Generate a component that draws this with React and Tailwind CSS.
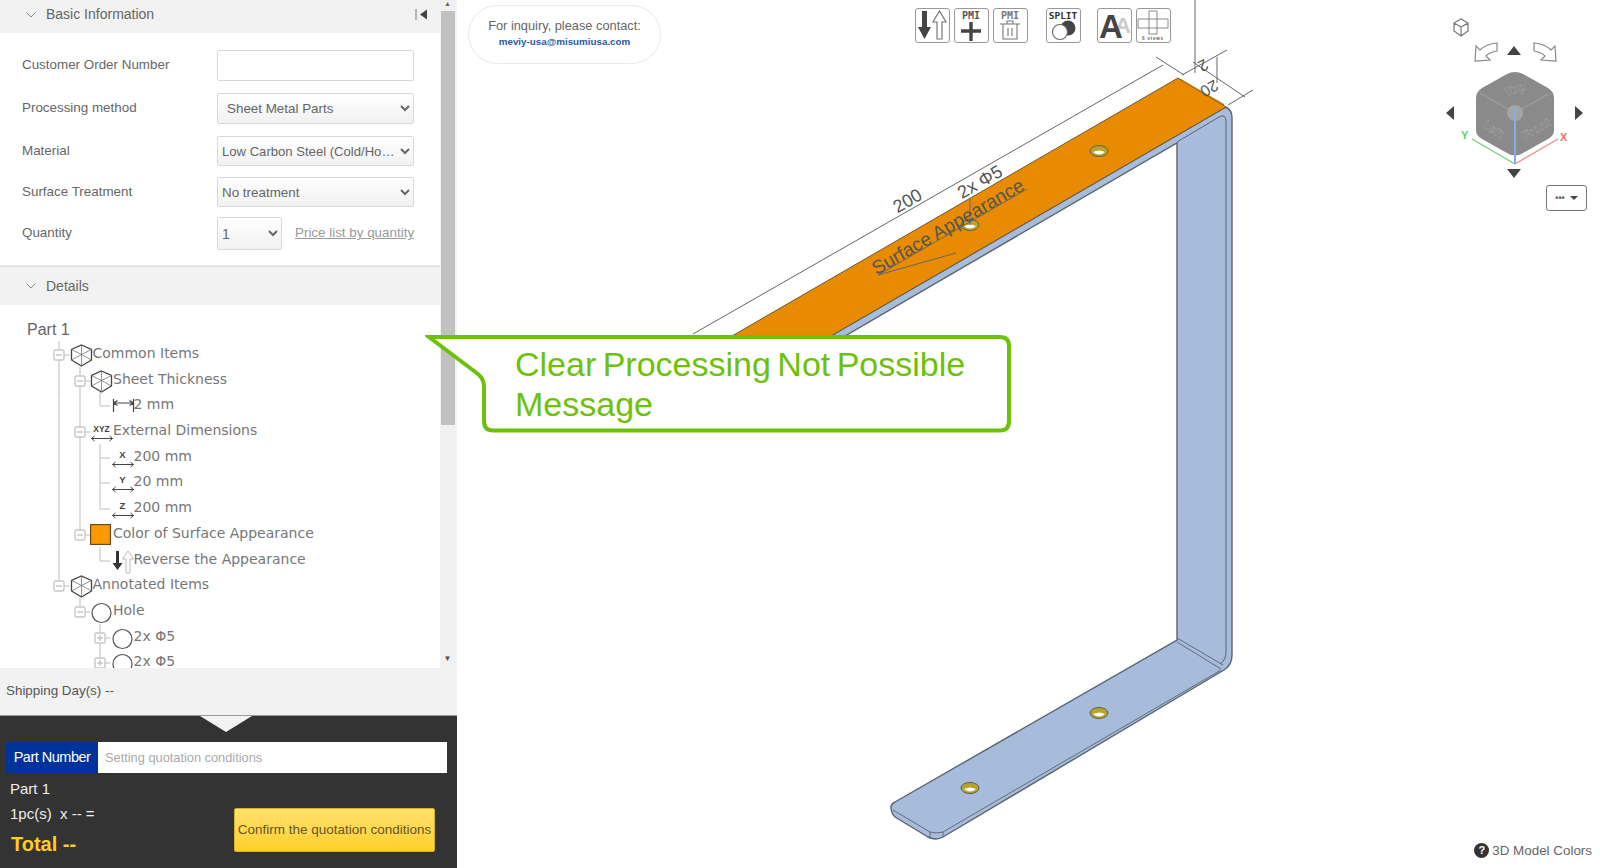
import { useState } from "react";

const treeRows = [
    { cells: ["minus"], icon: "cube", text: "Common Items" },
    { cells: ["v", "minus"], icon: "cube", text: "Sheet Thickness" },
    { cells: ["v", "v", "last"], icon: "thick", text: "2 mm" },
    { cells: ["v", "minus"], icon: "xyz", text: "External Dimensions" },
    { cells: ["v", "v", "tee"], icon: "x", text: "200 mm" },
    { cells: ["v", "v", "tee"], icon: "y", text: "20 mm" },
    { cells: ["v", "v", "last"], icon: "z", text: "200 mm" },
    { cells: ["v", "minusEnd"], icon: "color", text: "Color of Surface Appearance" },
    { cells: ["v", "", "last"], icon: "reverse", text: "Reverse the Appearance" },
    { cells: ["minusEnd"], icon: "cube", text: "Annotated Items" },
    { cells: ["", "minusEnd"], icon: "circle", text: "Hole" },
    { cells: ["", "", "plus"], icon: "circle", text: "2x Φ5" },
    { cells: ["", "", "plus"], icon: "circle", text: "2x Φ5" },
];

// 트리 연결선 셀
function TreeCell({ type }) {
    const line = "#c8c8c8";
    const isBox = type === "minus" || type === "minusEnd" || type === "plus";
    return (
        <svg width="20.5" height="26" viewBox="0 0 20.5 26" className="shrink-0 overflow-visible">
            {(type === "v" || type === "minus" || type === "tee" || type === "plus") && (
                <line x1="10" y1="0" x2="10" y2="26" stroke={line} strokeWidth="1.2" />
            )}
            {(type === "minusEnd" || type === "last") && <line x1="10" y1="0" x2="10" y2="14" stroke={line} strokeWidth="1.2" />}
            {(type === "tee" || type === "last") && <line x1="10" y1="14" x2="20" y2="14" stroke={line} strokeWidth="1.2" />}
            {isBox && (
                <>
                    <line x1="15" y1="14" x2="20.5" y2="14" stroke={line} strokeWidth="1.2" />
                    <rect x="5" y="9" width="10" height="10" rx="1.5" fill="#fff" stroke={line} strokeWidth="1.4" />
                    <line x1="7" y1="14" x2="13" y2="14" stroke="#bbb" strokeWidth="1.2" />
                    {type === "plus" && <line x1="10" y1="11" x2="10" y2="17" stroke="#bbb" strokeWidth="1.2" />}
                </>
            )}
        </svg>
    );
}

function ArrowDim({ label }) {
    return (
        <svg width="24" height="26" viewBox="0 0 24 26" className="overflow-visible">
            <text x="11.5" y="13.5" textAnchor="middle" fontSize={label.length > 1 ? 8.5 : 9.5} fontWeight="700" fill="#444" fontFamily="Liberation Sans, sans-serif">
                {label}
            </text>
            <path d="M1.5 20.5H22.5M1.5 20.5l3-2.5M1.5 20.5l3 2.5M22.5 20.5l-3-2.5M22.5 20.5l-3 2.5" fill="none" stroke="#444" strokeWidth="1" />
        </svg>
    );
}

function TreeIcon({ name }) {
    if (name === "cube") {
        return (
            <svg width="24" height="26" viewBox="0 0 24 26" className="overflow-visible">
                <path d="M11.5 4L21.5 8.5V19L11.5 25L1.5 19V8.5Z" fill="none" stroke="#444" strokeWidth="1.3" />
                <path d="M1.5 8.5L11.5 13.5L21.5 8.5M11.5 13.5V25M11.5 4V13.5M1.5 19L11.5 13.5L21.5 19" fill="none" stroke="#777" strokeWidth="0.8" />
            </svg>
        );
    }
    if (name === "thick") {
        return (
            <svg width="24" height="26" viewBox="0 0 24 26" className="overflow-visible">
                <path d="M2.5 7V20M22.5 7V20M2.5 11H22.5M2.5 11l4-2.5M2.5 11l4 2.5M22.5 11l-4-2.5M22.5 11l-4 2.5" fill="none" stroke="#444" strokeWidth="1.2" />
            </svg>
        );
    }
    if (name === "xyz") return <ArrowDim label="XYZ" />;
    if (name === "x") return <ArrowDim label="X" />;
    if (name === "y") return <ArrowDim label="Y" />;
    if (name === "z") return <ArrowDim label="Z" />;
    if (name === "color") {
        return <div className="w-[21px] h-[21px] mt-[3px] bg-[#ff9900] border border-[#6b4a10] shadow-[inset_0_0_0_1px_#e08a00]"></div>;
    }
    if (name === "reverse") {
        return (
            <svg width="24" height="26" viewBox="0 0 24 26" className="overflow-visible">
                <path d="M5 4H8V16H11.5L6.5 23L1.5 16H5Z" fill="#333" />
                <path d="M15 26V12H11.5L17 4L22.5 12H19V26Z" fill="#fff" stroke="#bbb" strokeWidth="1" />
            </svg>
        );
    }
    return (
        <svg width="24" height="26" viewBox="0 0 24 26" className="overflow-visible">
            <circle cx="11.5" cy="15" r="9.5" fill="none" stroke="#555" strokeWidth="1.2" />
        </svg>
    );
}

function TreeRow({ row }) {
    return (
        <div className="flex items-start h-[25.7px]">
            {row.cells.map((c, i) => (
                <TreeCell key={i} type={c} />
            ))}
            <div className="w-[23px] h-[26px] shrink-0">
                <TreeIcon name={row.icon} />
            </div>
            <span className="text-[14px] leading-[25px] text-[#777] whitespace-nowrap font-['DejaVu_Sans',sans-serif]">{row.text}</span>
        </div>
    );
}

function FormRow({ label, className, children }) {
    return (
        <div className={`flex items-center justify-between ${className}`}>
            <span className="text-[#666]">{label}</span>
            {children}
        </div>
    );
}

const selectClass =
    "w-[197px] h-full border border-[#d9d9d9] rounded-[2px] bg-gradient-to-b from-white to-[#f1f1f1] text-[#666] text-[13.4px]";

function ToolBtn({ className, children }) {
    return (
        <div className={`w-[35px] h-[35px] bg-white border-[1.5px] border-[#999] rounded-[3px] overflow-hidden ${className || ""}`}>
            <svg width="32" height="32" viewBox="0 0 32 32">
                {children}
            </svg>
        </div>
    );
}

function Toolbar() {
    const mono = "DejaVu Sans Mono, monospace";
    return (
        <div className="absolute top-[8px] left-[458px] flex">
            <ToolBtn>
                <path d="M6 2H11V18H15L8.5 30L2 18H6Z" fill="#444" />
                <path d="M21 30V13H17L23.5 2L30 13H26V30Z" fill="#fff" stroke="#777" strokeWidth="1.2" />
            </ToolBtn>
            <ToolBtn className="ml-[4px]">
                <text x="16" y="10" textAnchor="middle" fontSize="10" fontWeight="700" fill="#555" fontFamily={mono}>PMI</text>
                <path d="M16 13V32M6 22H26" stroke="#444" strokeWidth="3.4" />
            </ToolBtn>
            <ToolBtn className="ml-[4px]">
                <text x="16" y="10" textAnchor="middle" fontSize="10" fontWeight="700" fill="#777" fontFamily={mono}>PMI</text>
                <path d="M6 15H26M13 15V12H19V15M9 15V30H23V15M14 19V27M18 19V27" fill="none" stroke="#777" strokeWidth="1.1" />
            </ToolBtn>
            <ToolBtn className="ml-[18px]">
                <text x="16" y="10" textAnchor="middle" fontSize="9.5" fontWeight="700" fill="#333" fontFamily={mono}>SPLIT</text>
                <circle cx="21" cy="19" r="7.5" fill="#444" />
                <circle cx="13" cy="23" r="7.5" fill="#fff" stroke="#666" strokeWidth="1.1" />
            </ToolBtn>
            <ToolBtn className="ml-[16px]">
                <text x="25" y="24" textAnchor="middle" fontSize="22" fontWeight="700" fill="#ccc" fontFamily="Liberation Sans, sans-serif">A</text>
                <text x="13" y="29" textAnchor="middle" fontSize="33" fontWeight="700" fill="#444" fontFamily="Liberation Sans, sans-serif">A</text>
            </ToolBtn>
            <ToolBtn className="ml-[4px]">
                <path d="M12 2H20V10H31V19H20V25H12V19H1V10H12Z M12 10H20V19H12Z" fill="none" stroke="#888" strokeWidth="1" />
                <text x="16" y="30.5" textAnchor="middle" fontSize="4.6" letterSpacing="0.8" fontWeight="700" fill="#666" fontFamily="Liberation Sans, sans-serif">6 views</text>
            </ToolBtn>
        </div>
    );
}

function Hole({ cx, cy }) {
    return (
        <g>
            <ellipse cx={cx} cy={cy} rx="9" ry="5.5" fill="#b9a228" stroke="#5b5f55" strokeWidth="1" />
            <path d={`M${cx - 6} ${cy + 1}Q${cx} ${cy - 2} ${cx + 6} ${cy + 1}Q${cx} ${cy + 6} ${cx - 6} ${cy + 1}Z`} fill="#fff" />
        </g>
    );
}

// 3D 모델 도면
function PartDrawing() {
    const stroke = "#5a6470";
    return (
        <svg className="absolute inset-0" width="1143" height="868" viewBox="457 0 1143 868">
            <path
                d="M824 340L1226 107Q1232 110 1232 118V655Q1232 665 1224 670L943 837Q936 841 928 837L895 817Q891 813 891 807Q891 804 895 802L1177 640V143L838 340Z"
                fill="#a7bbdb"
                stroke={stroke}
                strokeWidth="1.4"
            />
            <path d="M1226 122V652Q1226 660 1220 664M1226 122Q1226 113 1219 117L1177 142" fill="none" stroke={stroke} strokeWidth="1" />
            <path d="M1177 638L1223 665M1177 642L1221 669M1221 670L943 832Q936 834 930 832L893 810M930 832V839M943 832V837" fill="none" stroke={stroke} strokeWidth="0.9" />
            <path d="M1178 78L1226 107L824 340H725Z" fill="#e88b00" stroke="#6a5a3a" strokeWidth="1" />
            <path d="M1181 80L1224 105" fill="none" stroke="#b87410" strokeWidth="1.5" />
            <Hole cx={1099} cy={151} />
            <Hole cx={970} cy={225} />
            <Hole cx={1099} cy={713} />
            <Hole cx={970} cy={788} />

            {/* 치수선 */}
            <g fill="none" stroke="#666" strokeWidth="1">
                <path d="M693 334L1163 65M1156 57L1184 75" />
                <path d="M1195 0V73M1182 75L1227 50M1193 62L1245 97M1228 105L1253 90M1217 57V83" />
                <path d="M970 225V199M878 275L1027 189M878 275L956 253" />
            </g>
            <g fill="#555" fontFamily="Liberation Sans, sans-serif">
                <text x="907" y="207" textAnchor="middle" fontSize="18" transform="rotate(-30 907 200)">200</text>
                <text x="980" y="188" textAnchor="middle" fontSize="18" transform="rotate(-30 980 182)">2x Φ5</text>
                <text x="948" y="233" textAnchor="middle" fontSize="19" transform="rotate(-30 948 227)">Surface Appearance</text>
                <text x="1209" y="93" textAnchor="middle" fontSize="16" transform="rotate(150 1209 88)">20</text>
                <text x="1203" y="70" textAnchor="middle" fontSize="16" transform="rotate(150 1203 65)">2</text>
            </g>
        </svg>
    );
}

function ViewCube() {
    return (
        <svg className="absolute inset-0" width="1143" height="868" viewBox="457 0 1143 868">
            <path d="M1461 19L1468 23V31L1461 36L1454 31V23ZM1454 23L1461 27L1468 23M1461 27V36" fill="#fff" stroke="#777" strokeWidth="1.2" />
            <path d="M1497 43Q1486 44 1480 50L1476 46L1475 61L1490 60L1486 56Q1490 52 1497 51Z" fill="#fff" stroke="#888" strokeWidth="1.2" />
            <path d="M1534 43Q1545 44 1551 50L1555 46L1556 61L1541 60L1545 56Q1541 52 1534 51Z" fill="#fff" stroke="#888" strokeWidth="1.2" />
            <path d="M1514 46L1521 55H1507ZM1514 178L1521 169H1507ZM1446 113L1454 106V120ZM1583 113L1575 106V120Z" fill="#444" />
            <path d="M1507 74Q1515 70 1523 74L1548 88Q1554 92 1554 98V130Q1554 136 1548 139L1523 153Q1515 158 1507 153L1482 139Q1476 136 1476 130V98Q1476 92 1482 88Z" fill="#8a8a8a" />
            <path d="M1480 93L1515 113L1550 93M1515 113V155" fill="none" stroke="#999" strokeWidth="1.5" />
            <circle cx="1515" cy="113" r="8" fill="#a4a4a4" />
            <g fontFamily="Liberation Sans, sans-serif" fontSize="12" fontWeight="700" fill="#7c7c7c" stroke="#aaaaaa" strokeWidth="0.5">
                <text x="1515" y="93" textAnchor="middle" transform="rotate(-20 1515 89)">Top</text>
                <text x="1493" y="133" textAnchor="middle" transform="rotate(35 1493 129)">Left</text>
                <text x="1536" y="133" textAnchor="middle" transform="rotate(-30 1536 129)">Front</text>
            </g>
            <path d="M1515 164L1472 139" stroke="#6fce7a" strokeWidth="1.3" />
            <path d="M1515 164L1558 139" stroke="#f08a8a" strokeWidth="1.3" />
            <path d="M1515 164V108" stroke="#7fb0ea" strokeWidth="2" />
            <text x="1461" y="139" fontSize="11" fontWeight="700" fill="#5ccf70" fontFamily="Liberation Sans, sans-serif">Y</text>
            <text x="1560" y="141" fontSize="11" fontWeight="700" fill="#ee7070" fontFamily="Liberation Sans, sans-serif">X</text>
        </svg>
    );
}

export default function App() {
    const [qty] = useState("1");

    return (
        <div className="relative w-[1600px] h-[868px] flex overflow-hidden bg-white font-['Liberation_Sans',Arial,sans-serif] text-[13.4px]">
            {/* 왼쪽 패널 */}
            <aside className="w-[457px] h-full shrink-0 flex flex-col">
                <div className="h-[668px] flex">
                    <div className="w-[440px] flex flex-col">
                        <div className="h-[33px] bg-[#f2f2f2] flex items-center pl-[26px] pr-[12px] pb-[4px] text-[14px]">
                            <svg width="10" height="6" viewBox="0 0 10 6" className="mr-[10px]">
                                <path d="M0.5 0.5L5 5L9.5 0.5" fill="none" stroke="#888" strokeWidth="1" />
                            </svg>
                            <span className="text-[#666] flex-1">Basic Information</span>
                            <svg width="13" height="11" viewBox="0 0 13 11">
                                <path d="M1 0V11" stroke="#777" strokeWidth="1" />
                                <path d="M12 0.5V10.5L5 5.5Z" fill="#444" />
                            </svg>
                        </div>
                        <div className="pt-[17px] pb-[15px] pl-[22px] pr-[26px] flex flex-col">
                            <FormRow label="Customer Order Number" className="h-[31px] mb-[12px]">
                                <input className="w-[197px] h-full border border-[#d9d9d9] rounded-[2px] bg-white" />
                            </FormRow>
                            <FormRow label="Processing method" className="h-[31px] mb-[12px]">
                                <select className={`${selectClass} pl-[5px]`} defaultValue="Sheet Metal Parts">
                                    <option>Sheet Metal Parts</option>
                                </select>
                            </FormRow>
                            <FormRow label="Material" className="h-[30px] mb-[11px]">
                                <select className="w-[197px] h-full border border-[#d9d9d9] rounded-[2px] bg-gradient-to-b from-white to-[#f1f1f1] text-[#666] text-[13.1px] truncate" defaultValue="Low Carbon Steel (Cold/Hot Rolled)">
                                    <option>Low Carbon Steel (Cold/Hot Rolled)</option>
                                </select>
                            </FormRow>
                            <FormRow label="Surface Treatment" className="h-[30px] mb-[10px]">
                                <select className={selectClass} defaultValue="No treatment">
                                    <option>No treatment</option>
                                </select>
                            </FormRow>
                            <div className="flex items-center h-[33px]">
                                <span className="text-[#666] w-[195px] shrink-0">Quantity</span>
                                <select className="w-[65px] shrink-0 h-full border border-[#d9d9d9] rounded-[2px] bg-gradient-to-b from-white to-[#f1f1f1] text-[#666] text-[14px]" defaultValue={qty}>
                                    <option>1</option>
                                </select>
                                <a className="ml-[13px] text-[#999] underline whitespace-nowrap">Price list by quantity</a>
                            </div>
                        </div>
                        <div className="h-[40px] bg-[#f2f2f2] border-t-2 border-[#e4e4e4] flex items-center pl-[26px] text-[14px]">
                            <svg width="10" height="6" viewBox="0 0 10 6" className="mr-[10px]">
                                <path d="M0.5 0.5L5 5L9.5 0.5" fill="none" stroke="#888" strokeWidth="1" />
                            </svg>
                            <span className="text-[#666]">Details</span>
                        </div>
                        <div className="flex-1 overflow-hidden">
                            <div className="pt-[12px] pl-[27px] h-[36px] text-[16px] leading-[25px] text-[#666]">Part 1</div>
                            <div className="pl-[49px]">
                                {treeRows.map((row, i) => (
                                    <TreeRow key={i} row={row} />
                                ))}
                            </div>
                        </div>
                    </div>
                    {/* 스크롤바 */}
                    <div className="w-[17px] bg-[#f1f1f1] flex flex-col items-center pr-[2px]">
                        <div className="h-[11px] text-[7px] leading-[8px] text-[#666]">▲</div>
                        <div className="w-[14px] h-[414px] bg-[#c1c1c1]"></div>
                        <div className="flex-1"></div>
                        <div className="h-[13px] text-[8px] leading-[8px] text-[#505050]">▼</div>
                    </div>
                </div>
                <div className="h-[47px] bg-[#f2f2f2] px-[6px] flex items-center text-[#555]">Shipping Day(s) --</div>
                <div className="relative flex-1 bg-[#333333] border-t border-[#999] pt-[26px] pl-[6px] pr-[10px]">
                    <svg className="absolute top-0 left-[200px]" width="52" height="16" viewBox="0 0 52 16">
                        <path d="M0 0H52L26 16Z" fill="#f2f2f2" />
                    </svg>
                    <div className="flex h-[31px]">
                        <div className="w-[92px] bg-[#003399] text-white text-[14.5px] flex items-center justify-center tracking-[-0.5px]">Part Number</div>
                        <div className="flex-1 bg-white text-[#aaaaaa] flex items-center pl-[7px] text-[12.8px]">Setting quotation conditions</div>
                    </div>
                    <div className="flex justify-between mt-[5px]">
                        <div className="pl-[4px] text-[#eeeeee] text-[15px]">
                            <div className="h-[25px] leading-[22px]">Part 1</div>
                            <div className="h-[25px] leading-[22px]">1pc(s)&nbsp; x -- =</div>
                            <div className="text-[20px] font-bold text-[#ffcc22] leading-[32px] pl-[1px]">Total --</div>
                        </div>
                        <button className="w-[201px] h-[44px] mt-[30px] mr-[12px] bg-gradient-to-b from-[#ffe16b] to-[#ffd024] border border-[#d8b030] rounded-[2px] text-[#665522] text-[13.5px] whitespace-nowrap">
                            Confirm the quotation conditions
                        </button>
                    </div>
                </div>
            </aside>

            {/* 3D 뷰어 */}
            <main className="relative flex-1 h-full">
                <PartDrawing />
                <ViewCube />
                <div className="absolute left-[11px] top-[5px] w-[193px] h-[59px] border border-[#e8e8e8] rounded-[30px] bg-white flex flex-col items-center justify-center pb-[3px]">
                    <span className="text-[12.8px] leading-[18px] text-[#666]">For inquiry, please contact:</span>
                    <span className="text-[9.8px] leading-[14px] font-bold text-[#2a5aa0]">meviy-usa@misumiusa.com</span>
                </div>
                <Toolbar />
                <button className="absolute left-[1089px] top-[185px] w-[41px] h-[26px] border-[1.5px] border-[#777] rounded-[3px] bg-white flex items-center justify-center gap-[5px]">
                    <span className="text-[#555] text-[9px] font-bold leading-[10px]">•••</span>
                    <span className="w-0 h-0 border-x-[4px] border-x-transparent border-t-[4px] border-t-[#444]"></span>
                </button>
                <div className="absolute right-[8px] bottom-[7px] flex items-center gap-[3px] text-[#666]">
                    <span className="w-[15px] h-[15px] rounded-full bg-[#333] text-white text-[11px] font-bold leading-[15px] text-center">?</span>
                    3D Model Colors
                </div>
            </main>

            {/* 안내 말풍선 */}
            <div className="absolute left-[425px] top-[335px] w-[587px] h-[98px]">
                <svg className="absolute inset-0" width="587" height="98" viewBox="0 0 587 98">
                    <path
                        d="M4 2H575Q584 2 584 11V86Q584 95.5 575 95.5H68Q59 95.5 59 86V52Q59 44 53 39Z"
                        fill="#fff"
                        stroke="#6cc20a"
                        strokeWidth="4"
                    />
                </svg>
                <div className="relative pl-[90px] pt-[9px] text-[34px] leading-[40px] text-[#6cc20a] [word-spacing:-3px]">
                    Clear Processing Not Possible
                    <br />
                    Message
                </div>
            </div>
        </div>
    );
}
